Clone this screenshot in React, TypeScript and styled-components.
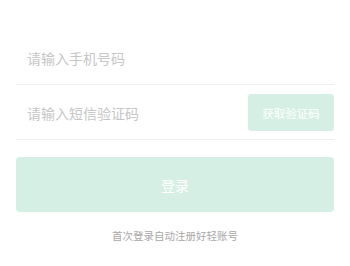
import React from "react";
import styled, { createGlobalStyle } from "styled-components";

const Global = createGlobalStyle`
  html, body { margin: 0; padding: 0; background: #ffffff; }
  body { font-family: "Noto Sans CJK SC", "Noto Sans", sans-serif; }
  * { box-sizing: border-box; }
`;

const Page = styled.div`
  width: 350px;
  height: 266px;
  padding: 30px 16px 0;
  display: flex;
  flex-direction: column;
`;

const Row = styled.div`
  height: 55px;
  display: flex;
  align-items: center;
  border-bottom: 1px solid #efefef;
`;

const Field = styled.input`
  flex: 1;
  min-width: 0;
  border: none;
  outline: none;
  background: transparent;
  padding: 1px 0 0 11px;
  font-family: "Noto Sans CJK SC", sans-serif;
  font-size: 14px;
  line-height: 20px;
  color: #333;
  &::placeholder { color: #c6c6c6; }
`;

const CodeButton = styled.button`
  width: 86px;
  height: 37px;
  border: none;
  border-radius: 3px;
  background: #d6efe5;
  color: #ffffff;
  font-family: "Noto Sans CJK SC", sans-serif;
  font-size: 11.5px;
  padding: 1px 0 0;
  margin-top: 1px;
`;

const LoginButton = styled.button`
  margin-top: 17px;
  height: 55px;
  width: 100%;
  border: none;
  border-radius: 4px;
  background: #d6efe5;
  color: #ffffff;
  font-family: "Noto Sans CJK SC", sans-serif;
  font-size: 14px;
  padding: 0;
`;

const Note = styled.div`
  margin-top: 17px;
  text-align: center;
  font-size: 10.5px;
  line-height: 14px;
  color: #a8a8a8;
`;

export default function App() {
  return (
    <>
      <Global />
      <Page>
        <Row>
          <Field placeholder="请输入手机号码" />
        </Row>
        <Row>
          <Field placeholder="请输入短信验证码" />
          <CodeButton>获取验证码</CodeButton>
        </Row>
        <LoginButton>登录</LoginButton>
        <Note>首次登录自动注册好轻账号</Note>
      </Page>
    </>
  );
}
